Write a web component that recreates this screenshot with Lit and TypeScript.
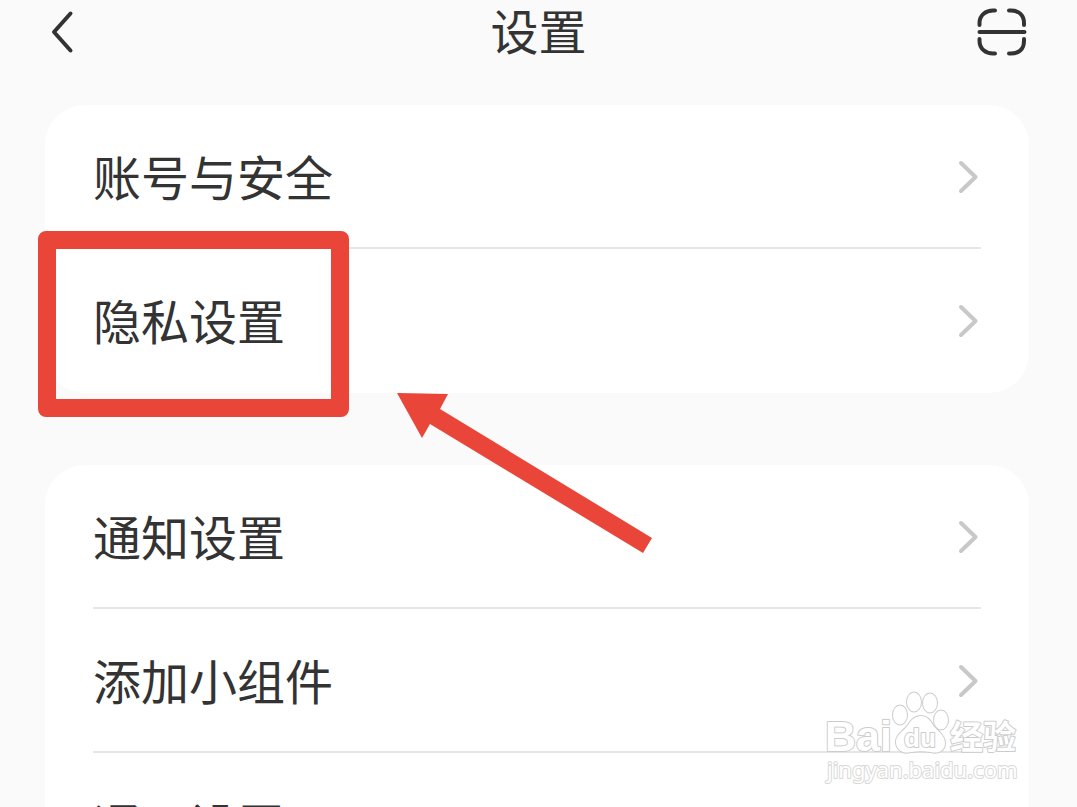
import { LitElement, html, css, svg, nothing } from "lit";
import { customElement, property } from "lit/decorators.js";

const GROUPS: string[][] = [
  ["账号与安全", "隐私设置"],
  ["通知设置", "添加小组件", "通用设置"],
];
const HIGHLIGHTED = "隐私设置";

const chevron = svg`<path d="M4 5 18.500 19 4 33" />`;

@customElement("settings-group")
class SettingsGroup extends LitElement {
  @property({ attribute: false }) items: string[] = [];

  static styles = css`
    :host {
      display: block;
    }
    .list {
      list-style: none;
      margin: 0;
      padding: 0 48px;
      background: #fff;
      border-radius: 40px;
    }
    .item {
      position: relative;
    }
    .row {
      display: flex;
      align-items: center;
      justify-content: space-between;
      box-sizing: border-box;
      height: 144px;
      color: #333;
      font-size: 48px;
      line-height: 72px;
      text-decoration: none;
      border-bottom: 2px solid #e6e6e6;
    }
    .label {
      padding-bottom: 2px;
    }
    .item:last-child .row {
      border-bottom-color: transparent;
    }
    .chevron {
      width: 24px;
      height: 36px;
      fill: none;
      stroke: #c8c8c8;
      stroke-width: 4;
      stroke-linecap: round;
      stroke-linejoin: round;
    }
    .frame {
      position: absolute;
      top: -18px;
      left: -55px;
      z-index: 2;
      box-sizing: border-box;
      width: 311px;
      height: 186px;
      border: 18px solid #e94639;
      border-radius: 8px;
      pointer-events: none;
    }
    .arrow {
      position: absolute;
      top: 144px;
      left: 304px;
      z-index: 2;
      width: 256px;
      height: 161px;
      fill: #e94639;
      pointer-events: none;
    }
  `;

  render() {
    return html`<ul class="list">
      ${this.items.map(
        (label) => html`<li class="item">
          <a class="row" href="#">
            <span class="label">${label}</span>
            <svg class="chevron" viewBox="0 0 24 36" aria-hidden="true">${chevron}</svg>
          </a>
          ${label === HIGHLIGHTED
            ? html`<div class="frame"></div>
                <svg class="arrow" viewBox="0 0 256 161" aria-hidden="true">
                  <path d="M0 0 51 1 43 16 255 145 246 160 33 31 25 45Z" />
                </svg>`
            : nothing}
        </li>`
      )}
    </ul>`;
  }
}

@customElement("app-root")
class AppRoot extends LitElement {
  static styles = css`
    :host {
      display: block;
      position: relative;
      height: 100vh;
      overflow: hidden;
      background: #fafafa;
      color: #333;
      font-family: "Noto Sans CJK SC", sans-serif;
    }
    .header {
      display: grid;
      grid-template-columns: 1fr auto 1fr;
      align-items: center;
      height: 64px;
      padding: 0 48px;
    }
    .title {
      margin: 0;
      padding-bottom: 6px;
      font-size: 48px;
      line-height: 56px;
      font-weight: 400;
    }
    .icon-button {
      display: flex;
      padding: 0;
      border: 0;
      background: none;
      color: inherit;
      justify-self: start;
    }
    .scan {
      justify-self: end;
    }
    .icon {
      width: 52px;
      height: 52px;
      fill: none;
      stroke: currentColor;
      stroke-width: 4;
      stroke-linecap: round;
      stroke-linejoin: round;
    }
    .groups {
      display: flex;
      flex-direction: column;
      gap: 72px;
      padding: 41px 48px 0 45px;
    }
    .watermark {
      position: absolute;
      right: 52px;
      bottom: 20px;
      z-index: 3;
      width: 200px;
      height: 100px;
      overflow: visible;
      fill: #fff;
      stroke: #ccc;
      stroke-width: 2;
      stroke-linejoin: round;
      paint-order: stroke;
      pointer-events: none;
    }
    .paw {
      stroke-width: 2;
    }
    .brand {
      font: 700 43px "Liberation Sans", sans-serif;
    }
    .du {
      font: 700 26px "Liberation Sans", sans-serif;
    }
    .cn {
      font: 700 33px "Noto Sans CJK SC", sans-serif;
    }
    .site {
      font: 400 22px "Noto Sans", sans-serif;
      stroke: #d8d8d8;
    }
  `;

  render() {
    return html`
      <header class="header">
        <button class="icon-button" type="button" aria-label="返回">
          <svg class="icon" viewBox="0 0 52 52"><path d="M22.500 7.500 6 26 22.500 44.500" /></svg>
        </button>
        <h1 class="title">设置</h1>
        <button class="icon-button scan" type="button" aria-label="扫一扫">
          <svg class="icon" viewBox="0 0 52 52">
            <path d="M2.500 19v-2C2.500 9 9 4.500 16 4.500h2M32 4.500h2c8 0 13 5 13 12.500v2M2.500 33v2c0 8 6.500 12.500 13.500 12.500h2M32 47.500h2c8 0 13-4.500 13-12.500v-2M2.500 26h45" />
          </svg>
        </button>
      </header>
      <main class="groups">
        ${GROUPS.map((items) => html`<settings-group .items=${items}></settings-group>`)}
      </main>
      <svg class="watermark" viewBox="0 0 200 100" role="img" aria-label="Baidu 经验">
        <text class="brand" x="0" y="64">Bai</text>
        <g class="paw">
          <ellipse cx="75" cy="28" rx="7" ry="9.500" />
          <ellipse cx="89" cy="15" rx="7" ry="9.500" />
          <ellipse cx="105" cy="16" rx="7" ry="9.500" />
          <ellipse cx="116" cy="33" rx="7" ry="9.500" />
          <path d="M96 29c-6 0-10 4-13 9-4 6-13 10-12 18 1 8 8 11 15 9 7-1 13-1 20 0 7 2 14-1 14-9 0-8-8-12-12-18-3-5-6-9-12-9Z" />
        </g>
        <text class="du" x="79" y="60">du</text>
        <text class="cn" x="125" y="62">经验</text>
        <text class="site" x="2" y="91">jingyan.baidu.com</text>
      </svg>
    `;
  }
}
